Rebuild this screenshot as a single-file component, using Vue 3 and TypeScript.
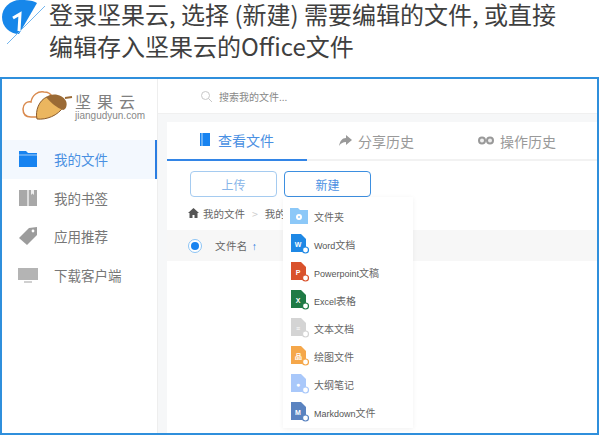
<script setup lang="ts">
interface NavItem { label: string; kind: string; active?: boolean }
const nav: NavItem[] = [
  { label: '我的文件', kind: 'folder', active: true },
  { label: '我的书签', kind: 'book' },
  { label: '应用推荐', kind: 'tag' },
  { label: '下载客户端', kind: 'monitor' },
]
interface MenuItem { latin: string; cn: string; color: string; letter: string; folder?: boolean }
const menu: MenuItem[] = [
  { latin: '', cn: '文件夹', color: '#8cc8f8', letter: '', folder: true },
  { latin: 'Word', cn: '文档', color: '#1e88e5', letter: 'W' },
  { latin: 'Powerpoint', cn: '文稿', color: '#d9522c', letter: 'P' },
  { latin: 'Excel', cn: '表格', color: '#1f7a45', letter: 'X' },
  { latin: '', cn: '文本文档', color: '#d4d4d4', letter: '≡' },
  { latin: '', cn: '绘图文件', color: '#f5a74a', letter: '品' },
  { latin: '', cn: '大纲笔记', color: '#a9c8fa', letter: '●' },
  { latin: 'Markdown', cn: '文件', color: '#5a83c0', letter: 'M' },
]
</script>

<template>
  <div class="page">
    <header class="head">
      <div class="badge">
        <svg width="49" height="48" viewBox="0 0 49 48">
          <path d="M37 3 C32 0 26 0 20 0 C10 0 2 8 2 17 C2 27 10 34 19 34 Z" fill="#1787ea" />
          <path d="M7 44 L45 6" stroke="#74b6ee" stroke-width="1" />
          <path d="M13 18 L20 14 L19 31" stroke="#fff" stroke-width="3" fill="none" />
        </svg>
      </div>
      <h1 class="title"><span>登录坚果云, 选择 (新建) 需要编辑的文件, 或直接</span><span>编辑存入坚果云的Office文件</span></h1>
    </header>

    <section class="frame">
      <aside class="side">
        <div class="logo">
          <svg width="54" height="34" viewBox="0 0 54 34">
            <path d="M20 28 H11 C5 28 3 24 3 20 C3 15 7 12 11 13 C12 6 18 2 24 3 C28 3 31 5 32 8" fill="none" stroke="#d98a4e" stroke-width="1.5" />
            <path d="M27 8 C19 11 15 22 17 30 C26 31 38 27 44 17 Z" fill="#ebb65f" stroke="#8a5a2a" stroke-width="1" />
            <path d="M26 8 C33 3 43 6 46 12 C48 17 45 21 43 21 C37 19 31 14 26 8 Z" fill="#9a6a35" />
            <path d="M45 9 L52 8" stroke="#9a6a35" stroke-width="2" />
          </svg>
          <div class="brand">
            <div class="brand-cn">坚果云</div>
            <div class="brand-en">jiangudyun.com</div>
          </div>
        </div>
        <nav class="nav">
          <div v-for="n in nav" :key="n.label" class="nav-row" :class="{ on: n.active }">
            <svg v-if="n.kind === 'folder'" class="nav-ico" viewBox="0 0 20 18"><path d="M1 1 H8 L10 3 H19 V17 H1 Z" fill="#1783f0" /><path d="M1 5 H19" stroke="#fff" stroke-width=".6" /></svg>
            <svg v-else-if="n.kind === 'book'" class="nav-ico" viewBox="0 0 20 18"><path d="M1 1 H9.4 V17 H1 Z M10.6 1 H19 V17 H10.6 Z" fill="#a8a8a8" /><path d="M13 1 V6 L14.5 4.5 L16 6 V1 Z" fill="#eee" /></svg>
            <svg v-else-if="n.kind === 'tag'" class="nav-ico" viewBox="0 0 20 18"><path d="M1 11 L11 1 L19 0 L19 8 L9 18 Z" fill="#9c9c9c" /><circle cx="15" cy="4" r="1.4" fill="#fff" /></svg>
            <svg v-else class="nav-ico" viewBox="0 0 20 18"><path d="M0 2 H20 V14 H0 Z" fill="#b4b4b4" /><path d="M6 16 H14" stroke="#c4c4c4" stroke-width="1.6" /></svg>
            <span>{{ n.label }}</span>
          </div>
        </nav>
      </aside>

      <div class="gutter-wrap">
        <div class="search">
          <svg width="13" height="13" viewBox="0 0 13 13"><circle cx="5.5" cy="5.5" r="4" fill="none" stroke="#c8c8c8" /><path d="M8.5 8.5 L12 12" stroke="#c8c8c8" /></svg>
          <span>搜索我的文件...</span>
        </div>
        <div class="panel">
          <div class="tabs">
            <div class="tab active">
              <svg width="12" height="13" viewBox="0 0 12 13"><path d="M1 0 H11 V13 H1 Z" fill="#1783f0" /><path d="M3 0 V13" stroke="#bcdcfb" /></svg>
              <span>查看文件</span>
            </div>
            <div class="tab">
              <svg width="13" height="11" viewBox="0 0 13 11"><path d="M7 0 L13 5 L7 10 V7 C4 7 2 8 0 11 C1 6 3 3 7 3 Z" fill="#999" /></svg>
              <span>分享历史</span>
            </div>
            <div class="tab">
              <svg width="16" height="9" viewBox="0 0 16 9"><circle cx="4" cy="4.5" r="3" fill="#eee" stroke="#999" stroke-width="2" /><circle cx="12" cy="4.5" r="3" fill="#eee" stroke="#999" stroke-width="2" /></svg>
              <span>操作历史</span>
            </div>
          </div>
          <div class="actions">
            <button class="btn light">上传</button>
            <button class="btn">新建</button>
          </div>
          <div class="crumbs">
            <svg width="11" height="10" viewBox="0 0 11 10"><path d="M5.5 0 L11 5 H9.5 V10 H6.5 V7 H4.5 V10 H1.5 V5 H0 Z" fill="#555" /></svg>
            <span>我的文件</span><em>&gt;</em><span class="clip">我的</span>
          </div>
          <div class="thead">
            <span class="radio"><i></i></span>
            <span class="col">文件名</span>
            <span class="arrow">↑</span>
          </div>

          <div class="menu">
            <div v-for="m in menu" :key="m.cn + m.latin" class="item">
              <span class="file">
                <svg width="20" height="20" viewBox="0 0 20 20">
                  <path v-if="m.folder" d="M0 2 H8 L10 4 H18 V18 H0 Z" :fill="m.color" />
                  <path v-else d="M1 0 H11 L16 5 V18 H1 Z" :fill="m.color" />
                  <text x="8" y="13" text-anchor="middle" font-size="7" font-weight="700" fill="#fff" font-family="Liberation Sans">{{ m.letter }}</text>
                  <circle v-if="m.folder" cx="9" cy="11" r="3" fill="#fff" />
                  <circle v-if="m.folder" cx="9" cy="11" r="1" :fill="m.color" />
                  <circle v-else cx="15.5" cy="16" r="3" fill="#fff" :stroke="m.color" stroke-width="1.2" />
                </svg>
              </span>
              <span class="label"><b v-if="m.latin">{{ m.latin }}</b>{{ m.cn }}</span>
            </div>
          </div>
        </div>
      </div>
    </section>
  </div>
</template>

<style>
html, body { margin: 0; background: #fff; }
</style>

<style scoped>
.page { width: 600px; height: 436px; overflow: hidden; font-family: "Noto Sans CJK SC", "Noto Sans", sans-serif; color: #444; }
.head { height: 77px; display: flex; align-items: flex-start; }
.badge { width: 49px; height: 48px; flex: none; }
.title { margin: 0; font-size: 24px; font-weight: 400; color: #404040; white-space: nowrap; display: flex; flex-direction: column; gap: 5px; }
.title span { display: block; line-height: 27px; }
.frame { box-sizing: border-box; width: 599px; height: 358px; border: 2px solid #2f8fdc; display: flex; background: #fff; }
.side { width: 155px; flex: none; border-right: 1px solid #eee; }
.logo { display: flex; align-items: center; gap: 1px; padding: 3px 0 0 18px; height: 50px; box-sizing: border-box; }
.brand-cn { font-size: 16px; letter-spacing: 6px; line-height: 20px; color: #808080; }
.brand-en { font-family: "Liberation Sans", sans-serif; font-size: 10px; line-height: 10px; color: #888; }
.nav { margin-top: 11px; }
.nav-row { height: 38.5px; display: flex; align-items: center; padding-left: 16px; gap: 16px; font-size: 13.5px; color: #777; box-sizing: border-box; }
.nav-row.on { background: #f3f8fe; color: #4a90e2; border-right: 2px solid #2a7de1; }
.nav-ico { width: 20px; height: 18px; flex: none; }
.gutter-wrap { flex: 1; display: flex; flex-direction: column; background: #f6f7f8; min-width: 0; }
.search { height: 35px; flex: none; background: #fff; display: flex; align-items: center; gap: 6px; padding-left: 42px; font-size: 10px; color: #888; box-sizing: border-box; border-bottom: 1px solid #f0f0f0; }
.panel { margin: 8px 0 0 9px; flex: 1; background: #fff; position: relative; }
.tabs { height: 39px; display: flex; border-bottom: 2px solid #f2f2f2; box-sizing: border-box; }
.tab { width: 136px; margin-bottom: -2px; display: flex; align-items: center; gap: 6px; padding: 0 0 2px 32px; box-sizing: border-box; font-size: 14px; color: #999; }
.tab.active { width: 140px; gap: 7px; color: #4a90e2; border-bottom: 2px solid #3385e6; }
.tab:last-child { padding-left: 35px; }
.actions { display: flex; gap: 7px; padding: 10px 0 0 23px; }
.btn { width: 87px; height: 26px; padding: 0; background: #fff; border: 1px solid #3d8fe0; border-radius: 4px; color: #4a90e2; font-size: 12px; font-family: inherit; }
.btn.light { border-color: #a5cbf0; color: #88b5e8; }
.crumbs { display: flex; align-items: center; gap: 4px; padding: 8px 0 0 21px; height: 16px; font-size: 10.5px; color: #666; }
.crumbs em { font-style: normal; color: #ccc; margin: 0 3px; }
.thead { margin-top: 9px; height: 31px; background: #f7f7f7; display: flex; align-items: center; padding-left: 21px; font-size: 10.5px; color: #666; }
.radio { width: 12px; height: 12px; border: 1px solid #8cc4f5; border-radius: 50%; display: flex; align-items: center; justify-content: center; background: #fff; }
.radio i { width: 8px; height: 8px; border-radius: 50%; background: #1783f0; }
.col { margin-left: 13px; letter-spacing: .4px; }
.arrow { margin-left: 4px; color: #2a7de1; font-weight: 700; font-family: "Liberation Sans", sans-serif; }
.menu { position: absolute; left: 116px; top: 75px; width: 130px; height: 231px; background: #fff; box-shadow: 0 1px 5px rgba(0,0,0,.06); padding-top: 5px; box-sizing: border-box; }
.item { height: 28px; display: flex; align-items: center; padding-left: 7px; gap: 4px; font-size: 10px; color: #666; }
.file { width: 20px; height: 20px; flex: none; }
.label { white-space: nowrap; }
.label b { font-family: "Liberation Sans", sans-serif; font-size: 9px; font-weight: 400; color: #555; }
</style>
